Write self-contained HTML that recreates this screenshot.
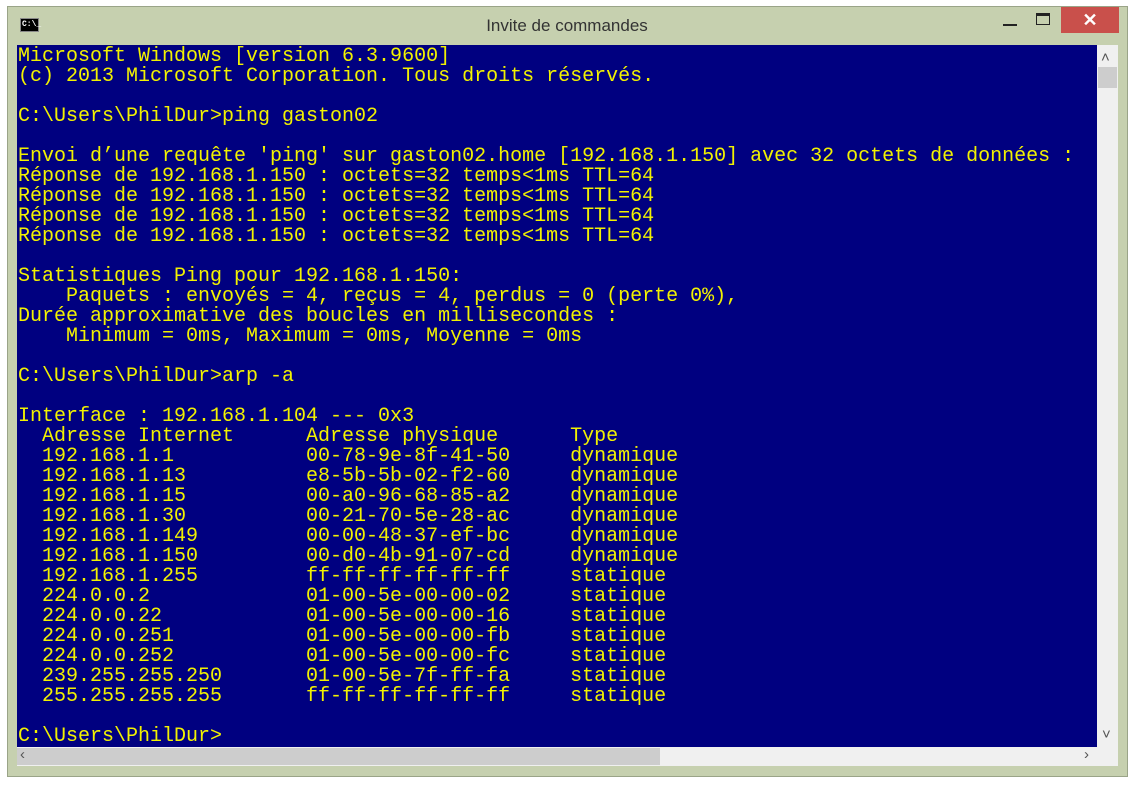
<!DOCTYPE html>
<html><head><meta charset="utf-8"><style>
body{margin:0;width:1138px;height:788px;background:#fff;position:relative;overflow:hidden}
.frame{position:absolute;left:7px;top:6px;width:1121px;height:771px;background:#c6d0af;border:1px solid #9aa488;box-sizing:border-box}
.title{position:absolute;left:0;top:16px;width:1134px;text-align:center;font:17px "Liberation Sans",sans-serif;color:#333}
.icon{position:absolute;left:20px;top:18px;width:19px;height:14px;background:#000;border:1px solid #888;color:#fff;font:bold 8px "Liberation Mono",monospace;line-height:12px;box-sizing:border-box;padding-left:1px}
.close{position:absolute;left:1061px;top:7px;width:58px;height:26px;background:#c9504b;color:#fff;font:bold 18px "Liberation Sans",sans-serif;text-align:center;line-height:26px}
.min{position:absolute;left:1003px;top:24px;width:14px;height:2px;background:#222}
.max{position:absolute;left:1036px;top:13px;width:14px;height:12px;border:1px solid #222;border-top-width:3px;box-sizing:border-box}
.con{position:absolute;left:17px;top:45px;width:1080px;height:702px;background:#000080;overflow:hidden}
pre{margin:0;font:20px/20px "Liberation Mono",monospace;color:#f2f200;padding:2px 0 0 1px}
.vs{position:absolute;left:1097px;top:45px;width:21px;height:702px;background:#f0f0f0}
.vt{position:absolute;left:1098px;top:67px;width:19px;height:21px;background:#cdcdcd}
.hs{position:absolute;left:17px;top:747px;width:1101px;height:19px;background:#f0f0f0}
.ht{position:absolute;left:17px;top:748px;width:643px;height:17px;background:#cdcdcd}
.ar{position:absolute;font:15px "Liberation Sans",sans-serif;color:#555}
</style></head><body>
<div class="frame"></div>
<div class="icon">C:\_</div>
<div class="title">Invite de commandes</div>
<div class="min"></div><div class="max"></div>
<div class="close">✕</div>
<div class="con"><pre>Microsoft Windows [version 6.3.9600]
(c) 2013 Microsoft Corporation. Tous droits réservés.

C:\Users\PhilDur>ping gaston02

Envoi d’une requête 'ping' sur gaston02.home [192.168.1.150] avec 32 octets de données :
Réponse de 192.168.1.150 : octets=32 temps&lt;1ms TTL=64
Réponse de 192.168.1.150 : octets=32 temps&lt;1ms TTL=64
Réponse de 192.168.1.150 : octets=32 temps&lt;1ms TTL=64
Réponse de 192.168.1.150 : octets=32 temps&lt;1ms TTL=64

Statistiques Ping pour 192.168.1.150:
    Paquets : envoyés = 4, reçus = 4, perdus = 0 (perte 0%),
Durée approximative des boucles en millisecondes :
    Minimum = 0ms, Maximum = 0ms, Moyenne = 0ms

C:\Users\PhilDur>arp -a

Interface : 192.168.1.104 --- 0x3
  Adresse Internet      Adresse physique      Type
  192.168.1.1           00-78-9e-8f-41-50     dynamique
  192.168.1.13          e8-5b-5b-02-f2-60     dynamique
  192.168.1.15          00-a0-96-68-85-a2     dynamique
  192.168.1.30          00-21-70-5e-28-ac     dynamique
  192.168.1.149         00-00-48-37-ef-bc     dynamique
  192.168.1.150         00-d0-4b-91-07-cd     dynamique
  192.168.1.255         ff-ff-ff-ff-ff-ff     statique
  224.0.0.2             01-00-5e-00-00-02     statique
  224.0.0.22            01-00-5e-00-00-16     statique
  224.0.0.251           01-00-5e-00-00-fb     statique
  224.0.0.252           01-00-5e-00-00-fc     statique
  239.255.255.250       01-00-5e-7f-ff-fa     statique
  255.255.255.255       ff-ff-ff-ff-ff-ff     statique

C:\Users\PhilDur></pre></div>
<div class="vs"></div><div class="vt"></div>
<div class="ar" style="left:1101px;top:49px">˄</div>
<div class="ar" style="left:1102px;top:726px">˅</div>
<div class="hs"></div><div class="ht"></div>
<div class="ar" style="left:20px;top:746px">‹</div>
<div class="ar" style="left:1084px;top:746px">›</div>
</body></html>
